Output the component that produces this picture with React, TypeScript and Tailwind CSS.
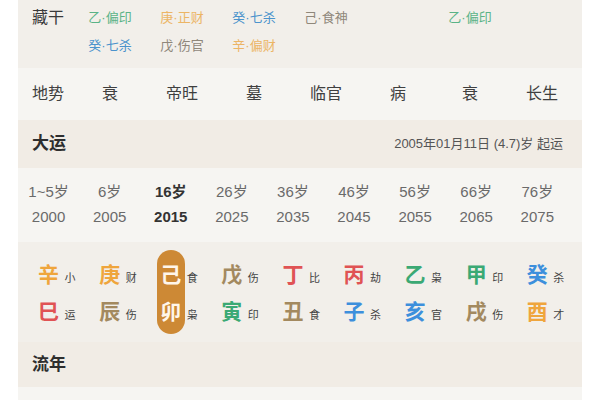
import React from "react";

const FONT = { fontFamily: '"Liberation Sans", "Noto Sans CJK SC", sans-serif' };

const C = {
  gold: "text-[#efa53c]",
  brown: "text-[#a3895f]",
  red: "text-[#e05354]",
  green: "text-[#3ba974]",
  blue: "text-[#3d8fdc]",
};

const cangRows: { t: string; c: string }[][] = [
  [
    { t: "乙·偏印", c: "text-[#5ab387]" },
    { t: "庚·正财", c: "text-[#ecb565]" },
    { t: "癸·七杀", c: "text-[#4b93cc]" },
    { t: "己·食神", c: "text-[#8f877a]" },
    { t: "", c: "" },
    { t: "乙·偏印", c: "text-[#5ab387]" },
    { t: "", c: "" },
  ],
  [
    { t: "癸·七杀", c: "text-[#4b93cc]" },
    { t: "戊·伤官", c: "text-[#8f877a]" },
    { t: "辛·偏财", c: "text-[#ecb565]" },
    { t: "", c: "" },
    { t: "", c: "" },
    { t: "", c: "" },
    { t: "", c: "" },
  ],
];

const dishi = ["衰", "帝旺", "墓", "临官", "病", "衰", "长生"];

const ages = [
  ["1~5岁", "2000"],
  ["6岁", "2005"],
  ["16岁", "2015"],
  ["26岁", "2025"],
  ["36岁", "2035"],
  ["46岁", "2045"],
  ["56岁", "2055"],
  ["66岁", "2065"],
  ["76岁", "2075"],
];

const pillars = [
  { g: "辛", gc: C.gold, gl: "小", z: "巳", zc: C.red, zl: "运" },
  { g: "庚", gc: C.gold, gl: "财", z: "辰", zc: C.brown, zl: "伤" },
  { g: "己", gc: "text-[#fff6ea]", gl: "食", z: "卯", zc: "text-[#fff6ea]", zl: "枭", active: true },
  { g: "戊", gc: C.brown, gl: "伤", z: "寅", zc: C.green, zl: "印" },
  { g: "丁", gc: C.red, gl: "比", z: "丑", zc: C.brown, zl: "食" },
  { g: "丙", gc: C.red, gl: "劫", z: "子", zc: C.blue, zl: "杀" },
  { g: "乙", gc: C.green, gl: "枭", z: "亥", zc: C.blue, zl: "官" },
  { g: "甲", gc: C.green, gl: "印", z: "戌", zc: C.brown, zl: "伤" },
  { g: "癸", gc: C.blue, gl: "杀", z: "酉", zc: C.gold, zl: "才" },
];

export default function App() {
  return (
    <div className="w-[600px] h-[400px] bg-white overflow-hidden" style={FONT}>
      <div className="ml-[18px] w-[564px] flex flex-col">
        {/* 藏干 */}
        <div className="h-[68px] bg-[#f2efea] flex pt-[6px]">
          <div className="w-[56px] pl-[14px] text-[16px] leading-[24px] text-[#3a3a3a]">藏干</div>
          <div className="flex flex-col gap-[4px]">
            {cangRows.map((row, i) => (
              <div key={i} className="flex">
                {row.map((it, j) => (
                  <div key={j} className={`w-[72px] text-center text-[13px] leading-[24px] ${it.c}`}>
                    {it.t}
                  </div>
                ))}
              </div>
            ))}
          </div>
        </div>
        {/* 地势 */}
        <div className="h-[52px] bg-[#f6f5f2] flex items-center text-[16px] text-[#3f3f3f]">
          <div className="w-[56px] pl-[14px]">地势</div>
          {dishi.map((d, i) => (
            <div key={i} className="w-[72px] text-center">
              {d}
            </div>
          ))}
        </div>
        {/* 大运 header */}
        <div className="h-[48px] bg-[#f1ece5] flex items-center justify-between pl-[14px] pr-[19px]">
          <div className="text-[17px] font-bold text-[#2e2e2e]">大运</div>
          <div className="text-[13px] text-[#555]">2005年01月11日 (4.7)岁 起运</div>
        </div>
        {/* ages */}
        <div className="h-[74px] bg-[#f6f5f2] grid grid-cols-[repeat(9,61.1px)] pt-[11px]">
          {ages.map(([a, y], i) => (
            <div
              key={i}
              className={`flex flex-col items-center text-[15px] leading-[25px] ${
                i === 2 ? "font-bold text-[#333]" : "text-[#6a6a6a]"
              }`}
            >
              <div>{a}</div>
              <div>{y}</div>
            </div>
          ))}
        </div>
        {/* ganzhi */}
        <div className="h-[100px] bg-[#f2efea] grid grid-cols-[repeat(9,61.1px)] pt-[8px]">
          {pillars.map((p, i) => (
            <div key={i} className="grid grid-cols-[1fr_28px_1fr]">
              <div />
              <div
                className={`h-[84px] w-[28px] rounded-full flex flex-col pt-[6px] text-[21px] font-bold ${
                  p.active ? "bg-[#cd8935]" : ""
                }`}
              >
                <div className={`h-[37px] flex items-center justify-center ${p.gc}`}>{p.g}</div>
                <div className={`h-[37px] flex items-center justify-center ${p.zc}`}>{p.z}</div>
              </div>
              <div className="flex flex-col pt-[10px] text-[11px] text-[#444] pl-[2px]">
                <div className="h-[37px] flex items-center">{p.gl}</div>
                <div className="h-[37px] flex items-center">{p.zl}</div>
              </div>
            </div>
          ))}
        </div>
        {/* 流年 header */}
        <div className="h-[45px] bg-[#f1ece5] flex items-center pl-[14px]">
          <div className="text-[17px] font-bold text-[#2e2e2e]">流年</div>
        </div>
        <div className="h-[20px] bg-[#f6f5f2]" />
      </div>
    </div>
  );
}
